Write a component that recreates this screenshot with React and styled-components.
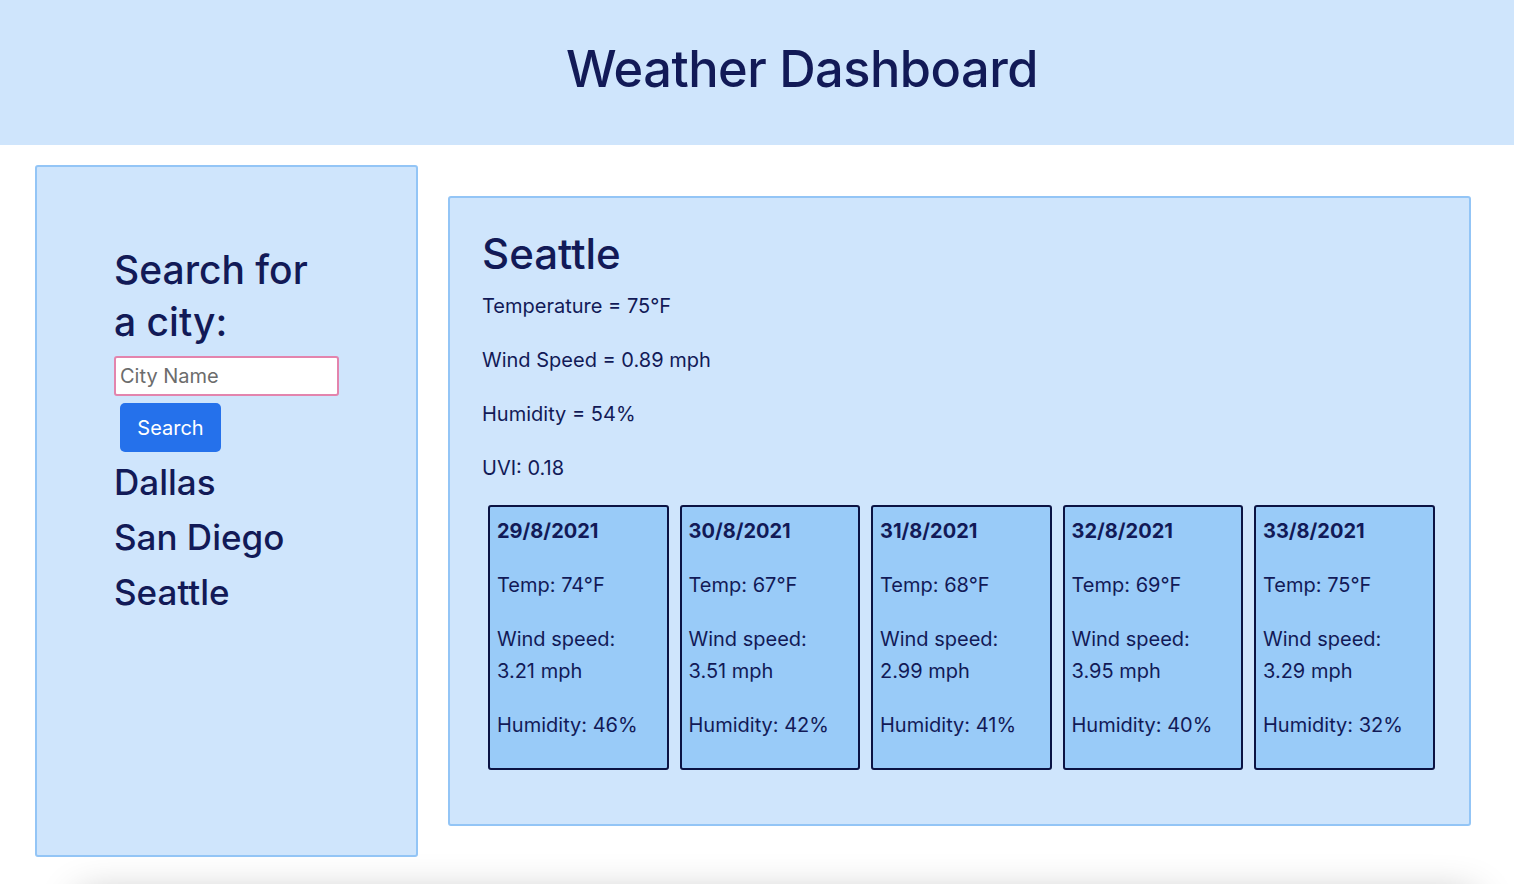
import React from 'react';
import styled, {createGlobalStyle} from "styled-components";

const forecast = [
  {date: '29/8/2021', temp: 74, wind: '3.21', humidity: 46},
  {date: '30/8/2021', temp: 67, wind: '3.51', humidity: 42},
  {date: '31/8/2021', temp: 68, wind: '2.99', humidity: 41},
  {date: '32/8/2021', temp: 69, wind: '3.95', humidity: 40},
  {date: '33/8/2021', temp: 75, wind: '3.29', humidity: 32},
]

const history = ['Dallas', 'San Diego', 'Seattle']

const App = () => {
  return (
    <>
      <GlobalStyle/>
      <Header>
        <h1>Weather Dashboard</h1>
      </Header>

      <Main>
        <SearchPanel>
          <SearchTitle>Search for a city:</SearchTitle>
          <CityInput type="text" placeholder="City Name"/>
          <SearchButton>Search</SearchButton>
          <HistoryList>
            {history.map(city => (
              <li key={city}>{city}</li>
            ))}
          </HistoryList>
        </SearchPanel>

        <CurrentPanel>
          <CityName>Seattle</CityName>
          <Stat>Temperature = 75°F</Stat>
          <Stat>Wind Speed = 0.89 mph</Stat>
          <Stat>Humidity = 54%</Stat>
          <Stat>UVI: 0.18</Stat>

          <Forecast>
            {forecast.map(day => (
              <DayCard key={day.date}>
                <DayDate>{day.date}</DayDate>
                <DayStat>Temp: {day.temp}°F</DayStat>
                <DayStat>Wind speed:<br/>{day.wind} mph</DayStat>
                <DayStat>Humidity: {day.humidity}%</DayStat>
              </DayCard>
            ))}
          </Forecast>
        </CurrentPanel>
      </Main>

      <Footer/>
    </>
  );
};

export default App;

const GlobalStyle = createGlobalStyle`
  * {
    box-sizing: border-box;
  }

  body {
    margin: 0;
    background: #fff;
    color: #121a57;
    font-family: Inter, "Noto Sans", sans-serif;
  }
`;

const Header = styled.header`
  height: 145px;
  padding: 0 0 8px 90px;
  background: #cfe5fc;
  display: flex;
  align-items: center;
  justify-content: center;

  > h1 {
    margin: 0;
    font-size: 50.5px;
    font-weight: 500;
    letter-spacing: -0.5px;
  }
`;

const Main = styled.main`
  display: flex;
  align-items: flex-start;
  gap: 30px;
  padding: 20px 0 0 35px;
`;

const Panel = styled.section`
  background: #cfe5fc;
  border: 2px solid #93c5f6;
  border-radius: 3px;
`;

const SearchPanel = styled(Panel)`
  flex: 0 0 383px;
  width: 383px;
  height: 692px;
  padding: 77px 77px 0;
`;

const SearchTitle = styled.h2`
  margin: 0 0 8px;
  font-size: 39px;
  line-height: 52px;
  font-weight: 500;
`;

const CityInput = styled.input`
  display: block;
  width: 225px;
  height: 40px;
  padding: 0 4px;
  border: 2px solid #e384ad;
  border-radius: 3px;
  background: #fff;
  font-family: inherit;
  font-size: 20px;
  color: #121a57;
  outline: none;

  &::placeholder {
    color: #6c6c6c;
  }
`;

const SearchButton = styled.button`
  display: block;
  margin: 7px 0 0 6px;
  width: 101px;
  height: 49px;
  border: none;
  border-radius: 5px;
  background: #2571eb;
  color: #fff;
  font-family: inherit;
  font-size: 20px;
`;

const HistoryList = styled.ul`
  list-style: none;
  margin: 3px 0 0;
  padding: 0;

  > li {
    font-size: 35px;
    font-weight: 500;
    line-height: 55px;
  }
`;

const CurrentPanel = styled(Panel)`
  flex: 0 0 1023px;
  width: 1023px;
  margin-top: 31px;
  padding: 31px 35px 54px 32px;
`;

const CityName = styled.h2`
  margin: 0 0 11px;
  font-size: 42px;
  line-height: 50px;
  font-weight: 500;
`;

const Stat = styled.p`
  margin: 0 0 22px;
  font-size: 20px;
  line-height: 32px;
`;

const Forecast = styled.div`
  display: flex;
  gap: 11px;
  margin: -1px 0 0 6px;
`;

const DayCard = styled.div`
  flex: 0 0 180.5px;
  height: 265px;
  padding: 8px 7px 5px;
  background: #99cbf8;
  border: 2px solid #0b1343;
  border-radius: 3px;
`;

const DayDate = styled.h3`
  margin: 0 0 22px;
  font-size: 20px;
  line-height: 32px;
  font-weight: 700;
`;

const DayStat = styled.p`
  margin: 0 0 22px;
  font-size: 20px;
  line-height: 32px;
`;

const Footer = styled.footer`
  height: 60px;
  margin: 40px 40px 0 80px;
  background: #fff;
  box-shadow: 0 0 40px rgba(0, 0, 0, 0.3);
`;
